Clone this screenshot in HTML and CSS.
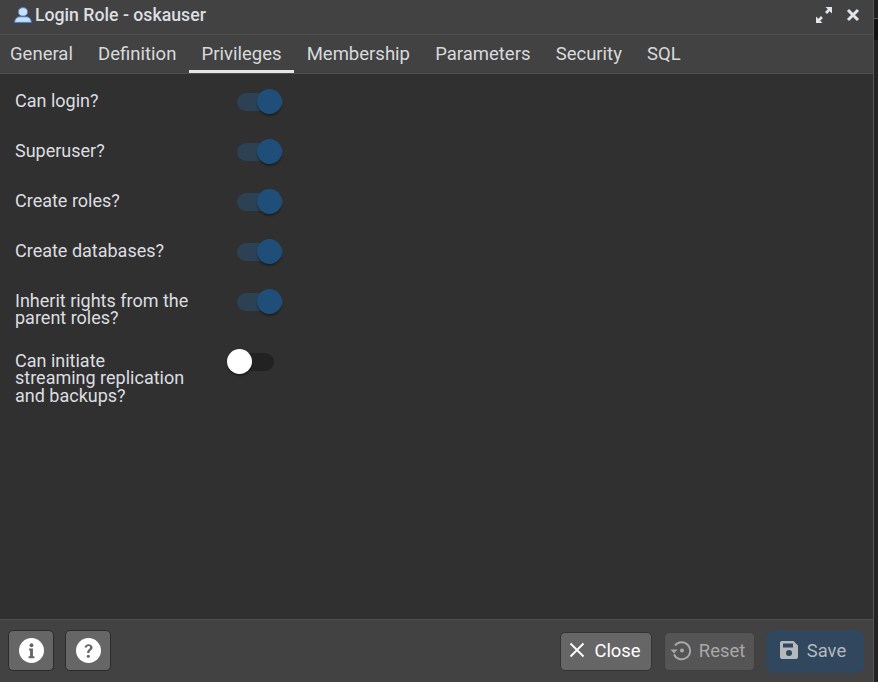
FILE: index.html
```html
<!DOCTYPE html>
<html lang="en">
<head>
<meta charset="utf-8">
<title>Login Role - oskauser</title>
<link rel="stylesheet" href="styles.css">
</head>
<body>
<div class="dialog">
  <header class="titlebar">
    <svg class="user-icon" viewBox="0 0 18 16" width="18" height="16"><path d="M9 .6c2.900 0 4.700 1.900 4.700 4.300S11.900 9.200 9 9.200 4.300 7.300 4.300 4.900 6.100.6 9 .6zM.6 15.400c.1-3.400 2.300-5.600 4.900-5.600h7c2.600 0 4.800 2.200 4.900 5.600z" fill="#c9dff5" stroke="#3f7cc6" stroke-width=".9"/></svg>
    <span class="title">Login Role - oskauser</span>
    <span class="spacer"></span>
    <svg class="expand" viewBox="0 0 18 18" width="18" height="18"><path d="M10.500 1H17v6.500l-2.300-2.300-2.700 2.700-2-1.900 2.800-2.700zM1 17v-6.500l2.300 2.300 2.700-2.700 1.900 2-2.700 2.600L7.500 17z" fill="#dfe5ea"/></svg>
    <svg class="close-x" viewBox="0 0 14 14" width="14" height="14"><path d="M2 2l10 10M12 2L2 12" stroke="#dfe5ea" stroke-width="3" fill="none"/></svg>
  </header>
  <nav class="tabs">
    <span class="tab">General</span>
    <span class="tab">Definition</span>
    <span class="tab active">Privileges</span>
    <span class="tab">Membership</span>
    <span class="tab">Parameters</span>
    <span class="tab">Security</span>
    <span class="tab">SQL</span>
  </nav>
  <main class="content">
    <div class="row"><label class="label">Can login?</label><span class="switch on"><span class="track"></span><span class="knob"></span></span></div>
    <div class="row"><label class="label">Superuser?</label><span class="switch on"><span class="track"></span><span class="knob"></span></span></div>
    <div class="row"><label class="label">Create roles?</label><span class="switch on"><span class="track"></span><span class="knob"></span></span></div>
    <div class="row"><label class="label">Create databases?</label><span class="switch on"><span class="track"></span><span class="knob"></span></span></div>
    <div class="row"><label class="label">Inherit rights from the parent roles?</label><span class="switch on"><span class="track"></span><span class="knob"></span></span></div>
    <div class="row"><label class="label">Can initiate streaming replication and backups?</label><span class="switch off"><span class="track"></span><span class="knob"></span></span></div>
  </main>
  <footer class="footer">
    <button class="btn icon-btn"><svg viewBox="0 0 26 26" width="25" height="25"><circle cx="13" cy="13" r="13" fill="#fff"/><circle cx="13" cy="7.500" r="2" fill="#666"/><path d="M10.500 11h4v8h1.500v2h-6v-2h1.500v-6h-1z" fill="#666"/></svg></button>
    <button class="btn icon-btn"><svg viewBox="0 0 26 26" width="25" height="25"><circle cx="13" cy="13" r="13" fill="#fff"/><path d="M9 10c0-2.300 1.800-3.600 4-3.600s4.200 1.300 4.200 3.500c0 3-3.200 3-3.200 5.600h-2.400c0-3.700 3-3.700 3-5.600 0-1-.7-1.500-1.600-1.500-1 0-1.600.6-1.700 1.600z" fill="#666"/><circle cx="12.800" cy="19" r="1.600" fill="#666"/></svg></button>
    <span class="spacer"></span>
    <button class="btn action close"><svg viewBox="0 0 16 16" width="16" height="16"><path d="M1.500 1.500l13 13M14.500 1.500l-13 13" stroke="#fff" stroke-width="1.800" fill="none"/></svg><span>Close</span></button>
    <button class="btn action reset"><svg viewBox="0 0 22 22" width="22" height="22"><path d="M5 6.500A8.500 8.500 0 1 1 4 15.500" stroke="#a9a9a9" stroke-width="1.900" fill="none"/><path d="M0.500 10.500h7L4 14.500z" fill="#a9a9a9"/><circle cx="12" cy="11.500" r="2" fill="#a9a9a9"/></svg><span>Reset</span></button>
    <button class="btn action save"><svg viewBox="0 0 20 20" width="20" height="20"><path d="M2.500 1h12L19 5.500V17a2 2 0 0 1-2 2H3a2 2 0 0 1-2-2V3a2 2 0 0 1 1.500-2z" fill="#b4b9bd"/><rect x="4" y="3.500" width="10" height="4" fill="#30475e"/><circle cx="10" cy="13" r="3" fill="#30475e"/></svg><span>Save</span></button>
  </footer>
</div>
</body>
</html>
```
FILE: styles.css
```css
* { box-sizing: border-box; }
html, body { margin: 0; height: 100%; }
body {
  background: linear-gradient(#1f1f1f 18px, #555 18px, #555 19px, #111 19px, #111 40px, #232323 40px);
  font-family: Roboto, "Liberation Sans", sans-serif;
  overflow: hidden;
}
.dialog {
  width: 874px;
  height: 682px;
  display: flex;
  flex-direction: column;
  background: #303030;
  color: #dfe1e3;
  border-right: 1px solid #565656;
}
.titlebar {
  height: 35px;
  flex: none;
  display: flex;
  align-items: center;
  background: #424242;
  border-bottom: 1px solid #4e4e4e;
  padding: 0 13px 4px 14px;
}
.user-icon { margin-right: 3px; }
.title { font-size: 17.7px; font-weight: 500; color: #dcdfe2; }
.spacer { flex: 1; }
.expand { margin-right: 13px; }
.tabs {
  height: 39px;
  flex: none;
  display: flex;
  background: #424242;
  border-bottom: 1px solid #4e4e4e;
}
.tab {
  padding: 0 12.6px;
  height: 38px;
  line-height: 38px;
  font-size: 18.5px;
  color: #d8dadc;
  border-bottom: 3px solid transparent;
}
.tab:first-child { padding-left: 10px; }
.tab.active { border-bottom-color: #e6e6e6; }
.content {
  flex: 1;
  padding: 10px 0 0 15px;
  display: flex;
  flex-direction: column;
  gap: 15px;
}
.row {
  display: flex;
  min-height: 35px;
  align-items: flex-start;
}
.label {
  width: 212px;
  padding: 8px 38px 2.2px 0;
  font-size: 18px;
  line-height: 17.4px;
  color: #dcdee0;
}
.switch {
  position: relative;
  display: block;
  width: 56px;
  height: 35px;
}
.track {
  position: absolute;
  left: 10px;
  top: 9px;
  width: 46px;
  height: 18px;
  border-radius: 9px;
}
.knob {
  position: absolute;
  width: 25px;
  height: 25px;
  top: 5px;
  border-radius: 50%;
  box-shadow: 0 2px 2px rgba(0,0,0,.35);
}
.on .track { background: #2c4254; }
.on .knob { left: 30px; background: #1f4e79; }
.off .track { background: #222; left: 1px; }
.off .knob { left: 0; background: #fff; }
.footer {
  height: 63px;
  flex: none;
  display: flex;
  align-items: center;
  gap: 11px;
  padding: 0 9px 0 8px;
  background: #424242;
  border-top: 1px solid #4e4e4e;
}
.btn {
  height: 39px;
  font-family: inherit;
  font-size: 18.4px;
  border-radius: 5px;
  border: 1px solid #2b2b2b;
  background: #666;
  display: flex;
  align-items: center;
  justify-content: center;
  padding: 0 0 2px;
}
.icon-btn { width: 46px; height: 41px; margin-bottom: 2px; padding: 0; }
.action { gap: 9px; }
.close { width: 92px; padding-right: 2px; color: #fff; border-color: #333; }
.reset { width: 91px; margin-left: 1px; padding-right: 4px; color: #a9a9a9; background: #555; border-color: #3f3f3f; gap: 7px; }
.save { width: 98px; height: 43px; padding-right: 5px; color: #b4b9bd; background: #30475e; border: 0; border-radius: 8px; gap: 8px; }
```
